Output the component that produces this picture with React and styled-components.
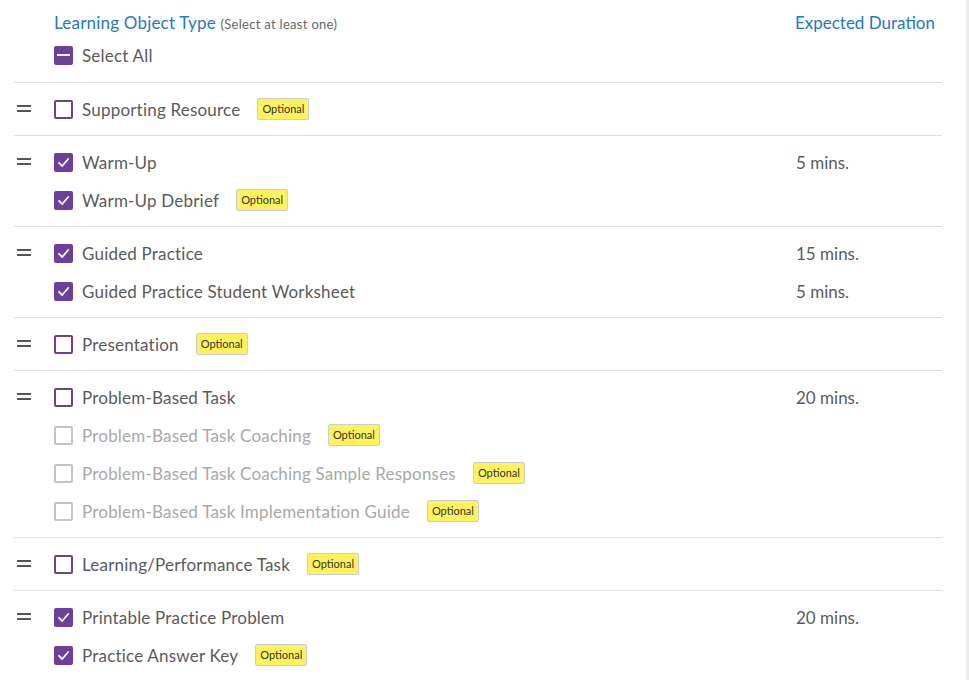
import React from 'react';
import styled, { createGlobalStyle } from 'styled-components';

const GlobalStyle = createGlobalStyle`
  html, body {
    margin: 0;
    padding: 0;
    background: #ffffff;
    font-family: Lato, "Noto Sans", sans-serif;
  }
`;

const groups = [
  [{ label: 'Supporting Resource', state: 'off', optional: true }],
  [
    { label: 'Warm-Up', state: 'on', duration: '5 mins.' },
    { label: 'Warm-Up Debrief', state: 'on', optional: true },
  ],
  [
    { label: 'Guided Practice', state: 'on', duration: '15 mins.' },
    { label: 'Guided Practice Student Worksheet', state: 'on', duration: '5 mins.' },
  ],
  [{ label: 'Presentation', state: 'off', optional: true }],
  [
    { label: 'Problem-Based Task', state: 'off', duration: '20 mins.' },
    { label: 'Problem-Based Task Coaching', state: 'disabled', optional: true },
    { label: 'Problem-Based Task Coaching Sample Responses', state: 'disabled', optional: true },
    { label: 'Problem-Based Task Implementation Guide', state: 'disabled', optional: true },
  ],
  [{ label: 'Learning/Performance Task', state: 'off', optional: true }],
  [
    { label: 'Printable Practice Problem', state: 'on', duration: '20 mins.' },
    { label: 'Practice Answer Key', state: 'on', optional: true },
  ],
];

const Check = ({ state }) => (
  <Box $state={state}>
    {state === 'on' && (
      <svg width="13" height="13" viewBox="0 0 13 13">
        <path d="M2 6.8 L5.2 10 L11.2 3" fill="none" stroke="#fff" strokeWidth="1.8" strokeLinecap="round" strokeLinejoin="round" />
      </svg>
    )}
    {state === 'some' && <Dash />}
  </Box>
);

const App = () => (
  <>
    <GlobalStyle />
    <Page>
      <Panel>
        <Header>
          <HeaderTop>
            <Title $wide>
              Learning Object Type <Hint>(Select at least one)</Hint>
            </Title>
            <Title>Expected Duration</Title>
          </HeaderTop>
          <Row>
            <Handle />
            <Check state="some" />
            <Label>Select All</Label>
          </Row>
        </Header>
        {groups.map((rows, gi) => (
          <Group key={gi}>
            {rows.map((r, ri) => (
              <Row key={ri}>
                {ri === 0 ? <Grip /> : <Handle />}
                <Check state={r.state} />
                <Label $muted={r.state === 'disabled'}>{r.label}</Label>
                {r.optional && <Badge>Optional</Badge>}
                <Duration>{r.duration}</Duration>
              </Row>
            ))}
          </Group>
        ))}
      </Panel>
    </Page>
  </>
);

const Page = styled.div`
  display: flex;
  width: 969px;
  height: 680px;
  overflow: hidden;
`;

const Panel = styled.div`
  width: 928px;
  padding: 0 24px 0 14px;
  border-right: 3px solid #e8edf2;
  background: #fff;
`;

const Header = styled.div`
  padding: 12px 0 8px;
  border-bottom: 1px solid #dedede;
`;

const HeaderTop = styled.div`
  display: flex;
  justify-content: space-between;
  align-items: baseline;
  padding: 0 7px 0 40px;
  height: 24px;
`;

const Title = styled.div`
  color: #1f78c8;
  font-size: 17px;
  letter-spacing: ${(p) => (p.$wide ? '0.2px' : '0')};
`;

const Hint = styled.span`
  color: #666;
  font-size: 13px;
  letter-spacing: 0.3px;
`;

const Group = styled.div`
  padding: 7px 0 7px;
  border-bottom: 1px solid #dedede;
  &:last-child {
    border-bottom: none;
  }
`;

const Row = styled.div`
  display: flex;
  align-items: center;
  height: 38px;
`;

const Handle = styled.div`
  width: 40px;
  flex-shrink: 0;
`;

const Grip = styled.div`
  width: 14px;
  height: 7px;
  margin: 0 23px 2px 3px;
  flex-shrink: 0;
  border-top: 2px solid #555;
  border-bottom: 2px solid #555;
  box-sizing: border-box;
`;

const Box = styled.div`
  width: 19px;
  height: 19px;
  box-sizing: border-box;
  border-radius: 2px;
  flex-shrink: 0;
  display: flex;
  align-items: center;
  justify-content: center;
  border: 2px solid ${(p) => (p.$state === 'disabled' ? '#c4c4c4' : '#6c3f9c')};
  background: ${(p) => (p.$state === 'on' || p.$state === 'some' ? '#6c3f9c' : '#fff')};
`;

const Dash = styled.div`
  width: 13px;
  height: 2px;
  background: #fff;
`;

const Label = styled.span`
  margin-left: 9px;
  font-size: 17px;
  letter-spacing: 0.2px;
  color: ${(p) => (p.$muted ? '#a8a8a8' : '#5a5a5a')};
`;

const Badge = styled.span`
  margin-left: 17px;
  padding: 0 4px;
  height: 20px;
  line-height: 20px;
  font-size: 11px;
  color: #333;
  background: #fff25a;
  border: 1px solid #c8cde0;
  border-radius: 2px;
`;

const Duration = styled.span`
  margin-left: auto;
  width: 146px;
  font-size: 17px;
  color: #5a5a5a;
`;

export default App;
